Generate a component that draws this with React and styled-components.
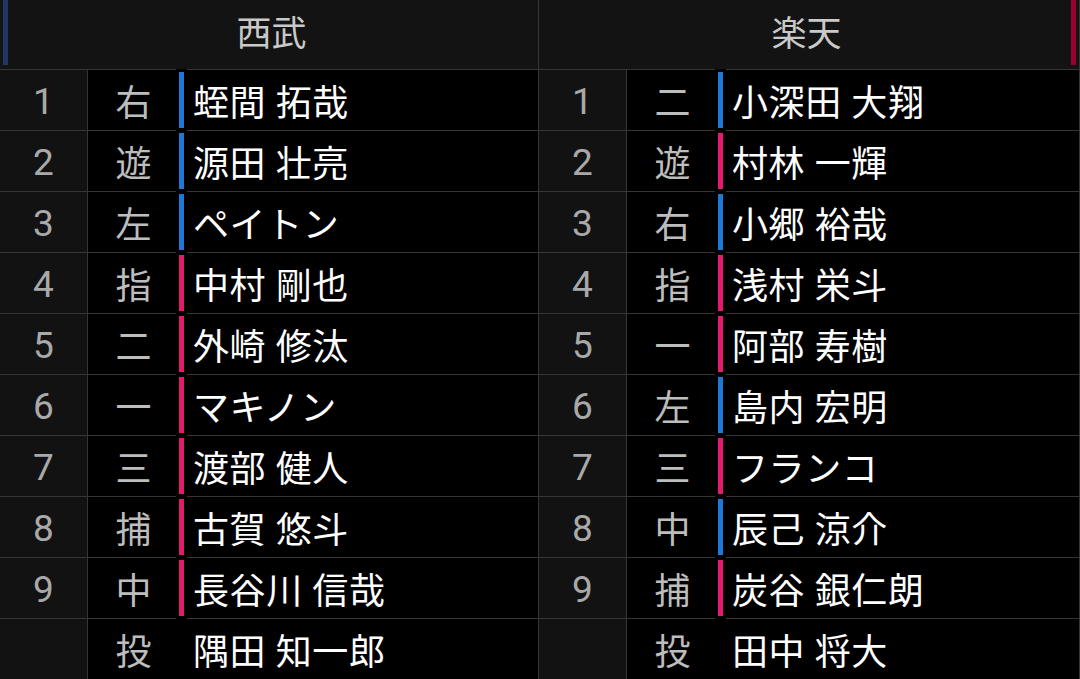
import React from 'react'
import styled, { createGlobalStyle } from 'styled-components';

const GlobalStyle = createGlobalStyle`
  html, body {
    margin: 0;
    padding: 0;
    background: #000;
  }
  body {
    font-family: Roboto, "Noto Sans CJK JP", sans-serif;
  }
`;

const Board = styled.div`
  width: 1080px;
  height: 679px;
  overflow: hidden;
  display: grid;
  grid-template-columns: 539px 541px;
  background: #000;
`;

const Team = styled.div`
  display: flex;
  flex-direction: column;
  border-right: 1px solid #363636;
`;

const Header = styled.div`
  height: 69px;
  display: flex;
  flex-direction: ${(props => props.side === 'right' ? 'row-reverse' : 'row')};
  align-items: flex-start;
  background: #131313;
  border-bottom: 1px solid #363636;
  padding: 0 3px;
`;

const HeaderBar = styled.div`
  width: 5px;
  height: 65px;
  background: ${(props => props.color)};
`;

const HeaderTitle = styled.div`
  flex: 1;
  height: 60px;
  display: flex;
  align-items: center;
  justify-content: center;
  font-size: 35px;
  color: #c9c9c9;
`;

const Row = styled.div`
  height: 60px;
  display: flex;
  align-items: center;
  border-bottom: ${(props => props.last ? 'none' : '1px solid #363636')};
`;

const Order = styled.div`
  width: 88px;
  height: 100%;
  padding-top: 3px;
  box-sizing: border-box;
  display: flex;
  align-items: center;
  justify-content: center;
  background: #121212;
  border-right: 1px solid #363636;
  font-size: 37px;
  color: #a9a9a9;
`;

const Pos = styled.div`
  width: 91px;
  display: flex;
  justify-content: center;
  font-size: 36px;
  color: #bdbdbd;
`;

const Bat = styled.div`
  position: relative;
  width: 5px;
  height: 56px;
  background: ${(props => props.color || 'transparent')};
  outline: ${(props => props.color ? '3px solid #000' : 'none')};
`;

const Name = styled.div`
  padding-left: 9px;
  font-size: 36px;
  letter-spacing: 0.6px;
  color: #fff;
  white-space: nowrap;
`;

const BLUE = '#1f78d6';
const PINK = '#e41a6c';

const teams = [
  {
    name: '西武',
    side: 'left',
    bar: '#1f3566',
    players: [
      ['1', '右', '蛭間 拓哉', BLUE],
      ['2', '遊', '源田 壮亮', BLUE],
      ['3', '左', 'ペイトン', BLUE],
      ['4', '指', '中村 剛也', PINK],
      ['5', '二', '外崎 修汰', PINK],
      ['6', '一', 'マキノン', PINK],
      ['7', '三', '渡部 健人', PINK],
      ['8', '捕', '古賀 悠斗', PINK],
      ['9', '中', '長谷川 信哉', PINK],
      ['', '投', '隅田 知一郎', null],
    ],
  },
  {
    name: '楽天',
    side: 'right',
    bar: '#9c0030',
    players: [
      ['1', '二', '小深田 大翔', BLUE],
      ['2', '遊', '村林 一輝', PINK],
      ['3', '右', '小郷 裕哉', BLUE],
      ['4', '指', '浅村 栄斗', PINK],
      ['5', '一', '阿部 寿樹', PINK],
      ['6', '左', '島内 宏明', BLUE],
      ['7', '三', 'フランコ', PINK],
      ['8', '中', '辰己 涼介', BLUE],
      ['9', '捕', '炭谷 銀仁朗', PINK],
      ['', '投', '田中 将大', null],
    ],
  },
];

const App = () => {
  return (
    <>
      <GlobalStyle />
      <Board>
        {teams.map(team => (
          <Team key={team.name}>
            <Header side={team.side}>
              <HeaderBar color={team.bar} />
              <HeaderTitle>{team.name}</HeaderTitle>
            </Header>
            {team.players.map((p, i) => (
              <Row key={i} last={i === team.players.length - 1}>
                <Order>{p[0]}</Order>
                <Pos>{p[1]}</Pos>
                <Bat color={p[3]} />
                <Name>{p[2]}</Name>
              </Row>
            ))}
          </Team>
        ))}
      </Board>
    </>
  )
}

export default App;
